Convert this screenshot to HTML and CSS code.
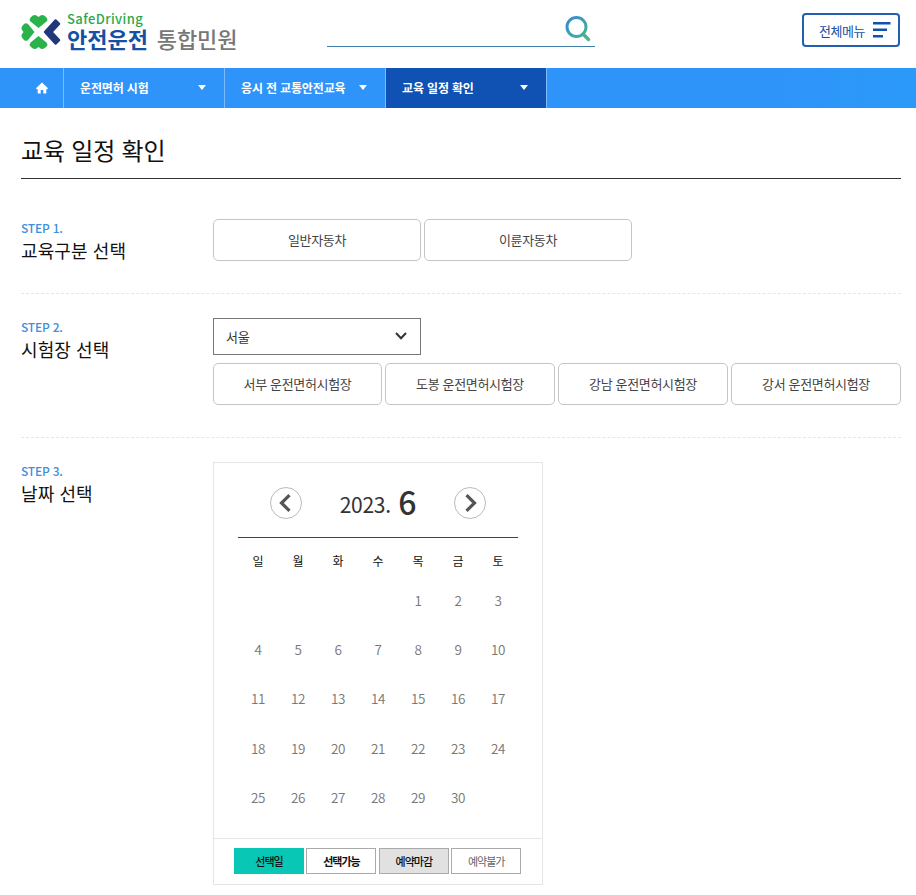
FILE: index.html
```html
<!DOCTYPE html>
<html lang="ko">
<head>
  <meta charset="UTF-8">
  <meta name="viewport" content="width=device-width, initial-scale=1.0">
  <title>교육 일정 확인 | 안전운전 통합민원</title>
  <link rel="stylesheet" href="styles.css">
</head>
<body>

  <header class="header">
    <a href="#" class="logo">
      <svg class="logo-mark" width="40" height="36" viewBox="0 0 40 36">
        <g fill="#2bb34b">
          <path id="leaf" d="M17.500 14L9.500 7.500Q7.800 5.500 9.500 3.500L11.500 1.800Q13.500 0.300 15.500 1.500L17.500 3L19.500 1.500Q21.500 0.300 23.500 1.800L25.500 3.500Q27.200 5.500 25.500 7.500Z"/>
          <use href="#leaf" transform="rotate(-90 17.500 18)"/>
          <use href="#leaf" transform="rotate(180 17.500 18)"/>
        </g>
        <path d="M34.500 6.500L24 18L34.500 29.500L38 26L30.500 18L38 10Z" fill="#21387c" stroke="#21387c" stroke-width="2.500" stroke-linejoin="round"/>
      </svg>
      <span class="logo-text">
        <span class="logo-en">SafeDriving</span>
        <span class="logo-ko"><b>안전운전</b> <span>통합민원</span></span>
      </span>
    </a>

    <form class="search">
      <input type="text" class="search-input" aria-label="검색">
      <button type="button" class="search-button" aria-label="검색">
        <svg width="26" height="27" viewBox="0 0 26 27" fill="none" stroke="url(#search-color)" stroke-width="3">
          <defs>
            <linearGradient id="search-color" x1="0" y1="0" x2="26" y2="27" gradientUnits="userSpaceOnUse">
              <stop offset="0.15" stop-color="#358fcb"/>
              <stop offset="0.9" stop-color="#4dba86"/>
            </linearGradient>
          </defs>
          <circle cx="11.500" cy="11" r="9.500"/>
          <path d="M18 18L23.500 23.500" stroke-width="3.500" stroke-linecap="round"/>
        </svg>
      </button>
    </form>

    <button type="button" class="menu-button">
      전체메뉴
      <svg width="18" height="16" viewBox="0 0 18 16" fill="#0f52ad">
        <path d="M0 0H17.500V2.500H0ZM0 6.500H14V9H0ZM0 13H10V15.500H0Z"/>
      </svg>
    </button>
  </header>

  <nav class="nav">
    <a href="#" class="nav-home" aria-label="홈">
      <svg width="12" height="12" viewBox="0 0 12 12" fill="#fff">
        <path d="M6 0.500L12 6.300L11.200 7.200H10.300V11.500H7.300V8H4.700V11.500H1.700V7.200H0.800L0 6.300Z"/>
      </svg>
    </a>
    <a href="#" class="nav-item">운전면허 시험</a>
    <a href="#" class="nav-item">응시 전 교통안전교육</a>
    <a href="#" class="nav-item active">교육 일정 확인</a>
  </nav>

  <main class="container">
    <h1>교육 일정 확인</h1>

    <section class="step">
      <div class="step-title">
        <span>STEP 1.</span>
        <h2>교육구분 선택</h2>
      </div>
      <div class="step-body">
        <div class="type-list">
          <button type="button" class="button">일반자동차</button>
          <button type="button" class="button">이륜자동차</button>
        </div>
      </div>
    </section>

    <section class="step">
      <div class="step-title">
        <span>STEP 2.</span>
        <h2>시험장 선택</h2>
      </div>
      <div class="step-body">
        <button type="button" class="select">
          서울
          <svg width="12" height="8" viewBox="0 0 12 8" fill="none" stroke="#333" stroke-width="2">
            <path d="M1 1L6 6.200L11 1"/>
          </svg>
        </button>
        <div class="place-list">
          <button type="button" class="button">서부 운전면허시험장</button>
          <button type="button" class="button">도봉 운전면허시험장</button>
          <button type="button" class="button">강남 운전면허시험장</button>
          <button type="button" class="button">강서 운전면허시험장</button>
        </div>
      </div>
    </section>

    <section class="step">
      <div class="step-title">
        <span>STEP 3.</span>
        <h2>날짜 선택</h2>
      </div>
      <div class="step-body">
        <div class="calendar">
          <div class="calendar-head">
            <button type="button" class="arrow" aria-label="이전 달">
              <svg width="14" height="18" viewBox="0 0 14 18" fill="none" stroke="#555" stroke-width="3.200">
                <path d="M10.500 1.200L2.500 9L10.500 16.800"/>
              </svg>
            </button>
            <p class="month">2023. <b>6</b></p>
            <button type="button" class="arrow" aria-label="다음 달">
              <svg width="14" height="18" viewBox="0 0 14 18" fill="none" stroke="#555" stroke-width="3.200">
                <path d="M3.500 1.200L11.500 9L3.500 16.800"/>
              </svg>
            </button>
          </div>
          <table class="days">
            <thead>
              <tr><th>일</th><th>월</th><th>화</th><th>수</th><th>목</th><th>금</th><th>토</th></tr>
            </thead>
            <tbody>
              <tr><td></td><td></td><td></td><td></td><td>1</td><td>2</td><td>3</td></tr>
              <tr><td>4</td><td>5</td><td>6</td><td>7</td><td>8</td><td>9</td><td>10</td></tr>
              <tr><td>11</td><td>12</td><td>13</td><td>14</td><td>15</td><td>16</td><td>17</td></tr>
              <tr><td>18</td><td>19</td><td>20</td><td>21</td><td>22</td><td>23</td><td>24</td></tr>
              <tr><td>25</td><td>26</td><td>27</td><td>28</td><td>29</td><td>30</td><td></td></tr>
            </tbody>
          </table>
          <div class="legend">
            <span class="legend-item selected">선택일</span>
            <span class="legend-item available">선택가능</span>
            <span class="legend-item closed">예약마감</span>
            <span class="legend-item disabled">예약불가</span>
          </div>
        </div>
      </div>
    </section>
  </main>

</body>
</html>
```

FILE: styles.css
```css
* {
  box-sizing: border-box;
}

body {
  margin: 0;
  background-color: #fff;
  font-family: "Noto Sans CJK KR", "Noto Sans", sans-serif;
  font-size: 13px;
  color: #111;
}

h1, h2, p {
  margin: 0;
  font-weight: 400;
}

a {
  color: inherit;
  text-decoration: none;
}

button, input {
  font-family: inherit;
  padding: 0;
  border: none;
  background: none;
}

button {
  cursor: pointer;
}

svg {
  display: block;
}

/* header */
.header {
  display: flex;
  align-items: flex-start;
  height: 68px;
  padding: 13px 16px 0 21px;
}

.logo {
  display: flex;
  width: 306px;
}

.logo-mark {
  margin: 1px 6px 0 0;
}

.logo-text {
  display: flex;
  flex-direction: column;
}

.logo-en {
  font-size: 13px;
  line-height: 12px;
  letter-spacing: 0.4px;
  font-weight: 500;
  color: #2ba84a;
}

.logo-ko {
  font-size: 22px;
  line-height: 26px;
  font-weight: 500;
  color: #777;
  white-space: nowrap;
}

.logo-ko b {
  margin-right: 2.5px;
  color: #1550a5;
}

.search {
  display: flex;
  width: 268px;
  height: 34px;
  border-bottom: 1px solid #3f7fa5;
}

.search-input {
  flex: 1;
  min-width: 0;
  outline: none;
}

.search-button {
  width: 30px;
  height: 32px;
}

.menu-button {
  display: flex;
  align-items: center;
  justify-content: center;
  gap: 8px;
  width: 98px;
  height: 34px;
  margin-left: auto;
  padding-left: 8px;
  border: 2px solid #2360b0;
  border-radius: 4px;
  font-size: 13px;
  color: #1e4f9c;
  letter-spacing: -0.5px;
}

/* navigation */
.nav {
  display: flex;
  height: 40px;
  background: linear-gradient(to right, #2f94fa 85%, #2a99f9);
  color: #fff;
}

.nav-home {
  display: flex;
  align-items: center;
  justify-content: flex-end;
  width: 64px;
  padding-right: 15px;
  border-right: 1px solid #7bbcfc;
}

.nav-item {
  display: flex;
  align-items: center;
  justify-content: space-between;
  width: 161px;
  padding: 0 18px 2px 16px;
  border-right: 1px solid #7bbcfc;
  font-size: 12px;
  font-weight: 700;
  letter-spacing: -0.15px;
}

.nav-item::after {
  content: "";
  border: 4px solid transparent;
  border-top: 5px solid #fff;
  border-bottom: none;
}

.nav-item.active {
  background-color: #0f52b4;
}

/* content */
.container {
  padding: 0 15px 0 21px;
}

h1 {
  height: 71px;
  padding-top: 24px;
  border-bottom: 1px solid #333;
  font-size: 24px;
  line-height: 36px;
  letter-spacing: -0.2px;
  color: #111;
}

.step {
  display: flex;
  padding: 24px 0 32px;
  border-bottom: 1px dashed #e6e6e6;
}

h1 + .step {
  padding: 40px 0 29px;
}

.step:last-child {
  padding-bottom: 0;
  border-bottom: none;
}

.step-title {
  width: 192px;
}

.step-title span {
  display: block;
  font-size: 12px;
  line-height: 18px;
  font-weight: 500;
  letter-spacing: -0.2px;
  color: #3f8fdc;
}

.step-title h2 {
  font-size: 18px;
  line-height: 27px;
  letter-spacing: 0.1px;
}

.step-body {
  flex: 1;
}

.type-list {
  display: flex;
  gap: 3px;
}

.type-list .button {
  width: 208px;
}

.place-list {
  display: grid;
  grid-template-columns: 169px repeat(3, 1fr);
  gap: 3px;
}

.button {
  height: 42px;
  padding-bottom: 2px;
  border: 1px solid #c5c5c5;
  border-radius: 5px;
  font-size: 13px;
  letter-spacing: -0.35px;
  color: #444;
}

.select {
  display: flex;
  align-items: center;
  justify-content: space-between;
  width: 208px;
  height: 37px;
  margin-bottom: 8px;
  padding: 0 13px 1px 12px;
  border: 1px solid #777;
  font-size: 13px;
  letter-spacing: -0.3px;
  color: #333;
}

/* calendar */
.calendar {
  width: 330px;
  height: 423px;
  border: 1px solid #e5e5e5;
}

.calendar-head {
  display: flex;
  justify-content: space-between;
  height: 75px;
  margin: 0 24px;
  padding: 24px 32px 0;
  border-bottom: 1px solid #444;
}

.arrow {
  display: flex;
  align-items: center;
  justify-content: center;
  width: 32px;
  height: 32px;
  border: 1px solid #bbb;
  border-radius: 50%;
}

.month {
  font-size: 21px;
  line-height: 28px;
  letter-spacing: -0.3px;
  color: #333;
}

.month b {
  margin-left: 2px;
  font-size: 32px;
  font-weight: 500;
  vertical-align: -2px;
}

.days {
  width: 280px;
  margin: 0 24px;
  border-collapse: collapse;
  table-layout: fixed;
  text-align: center;
}

.days th {
  height: 48px;
  padding: 0 0 3px;
  font-size: 12px;
  font-weight: 400;
}

.days td {
  height: 49.2px;
  padding: 0 0 21px;
  font-size: 13.5px;
  font-weight: 350;
  letter-spacing: -0.4px;
  color: #777;
}

.legend {
  display: flex;
  gap: 2.4px;
  margin-top: 6px;
  padding: 9px 0 0 20px;
  border-top: 1px solid #e5e5e5;
}

.legend-item {
  width: 70px;
  height: 26px;
  border: 1px solid #aaa;
  font-size: 11px;
  line-height: 24px;
  letter-spacing: -1px;
  text-align: center;
}

.legend-item.selected {
  border-color: #08c7b4;
  background-color: #08c7b4;
  font-weight: 500;
}

.legend-item.available {
  font-weight: 700;
}

.legend-item.closed {
  background-color: #e1e1e1;
  font-weight: 500;
}

.legend-item.disabled {
  color: #666;
}
```
